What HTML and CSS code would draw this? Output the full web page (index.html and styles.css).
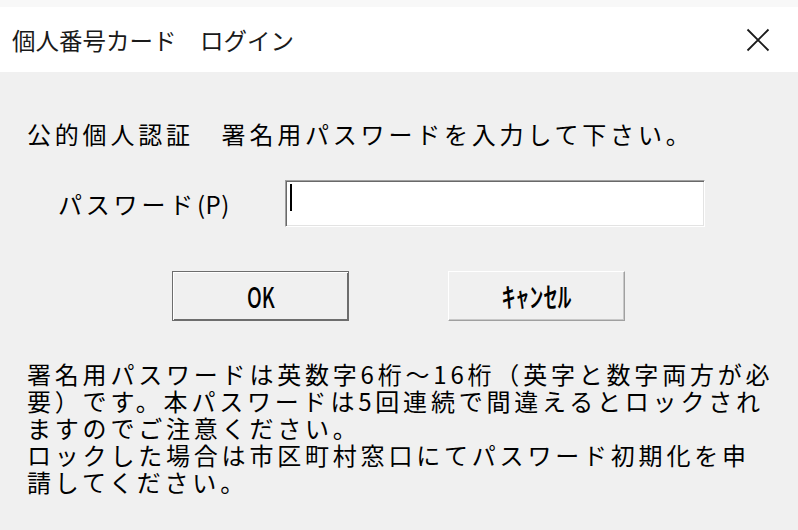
FILE: index.html
```html
<!DOCTYPE html>
<html lang="ja">
<head>
  <meta charset="UTF-8">
  <meta name="viewport" content="width=device-width, initial-scale=1.0">
  <title>個人番号カード ログイン</title>
  <link rel="stylesheet" href="styles.css">
</head>
<body>

  <div class="top-strip"></div>

  <div class="titlebar">
    <span class="title">個人番号カード　ログイン</span>
    <span class="close-btn">
      <svg width="24" height="24" viewBox="0 0 24 24">
        <path d="M1.5 1.5 L22.5 22.5 M22.5 1.5 L1.5 22.5" stroke="#1a1a1a" stroke-width="1.8" fill="none"/>
      </svg>
    </span>
  </div>

  <div class="dialog">
    <p class="lead">公的個人認証　署名用パスワードを入力して下さい。</p>

    <div class="field-row">
      <label class="field-label" for="pin">パスワード<span class="accel">(P)</span></label>
      <div class="text-box" id="pin"><span class="caret"></span></div>
    </div>

    <div class="buttons">
      <button type="button" class="btn btn-default"><span class="btn-text ok">OK</span></button>
      <button type="button" class="btn"><span class="btn-text">ｷｬﾝｾﾙ</span></button>
    </div>

    <div class="note">
      <div class="note-line">署名用パスワードは英数字6桁～16桁（英字と数字両方が必</div>
      <div class="note-line">要）です。本パスワードは5回連続で間違えるとロックされ</div>
      <div class="note-line">ますのでご注意ください。</div>
      <div class="note-line">ロックした場合は市区町村窓口にてパスワード初期化を申</div>
      <div class="note-line">請してください。</div>
    </div>
  </div>

</body>
</html>
```

FILE: styles.css
```css
body {
  margin: 0;
  background-color: #f0f0f0;
  font-family: "Noto Sans CJK JP", "Noto Sans", sans-serif;
  color: #000;
  width: 798px;
  height: 530px;
  overflow: hidden;
}

.top-strip {
  height: 7px;
  background-color: #f8f8f8;
}

.titlebar {
  height: 65px;
  background-color: #fff;
  display: flex;
  align-items: center;
  justify-content: space-between;
  padding: 0 28px 0 12px;
}

.title {
  font-size: 23.5px;
  color: #1a1a1a;
}

.close-btn {
  display: flex;
  width: 24px;
  height: 24px;
}

.dialog {
  padding-left: 27px;
}

.lead {
  margin: 48px 0 0;
  font-size: 24px;
  line-height: 28px;
  letter-spacing: 3.8px;
}

.field-row {
  display: flex;
  align-items: center;
  margin-top: 32px;
}

.field-label {
  width: 227px;
  margin-left: 31px;
  font-size: 24px;
  letter-spacing: 3.8px;
}

.accel {
  letter-spacing: 0.5px;
}

.text-box {
  width: 420px;
  height: 47px;
  box-sizing: border-box;
  background-color: #fff;
  border-top: 1px solid #a0a0a0;
  border-left: 1px solid #a0a0a0;
  border-bottom: 1px solid #fff;
  border-right: 1px solid #fff;
  box-shadow: inset 1px 1px #696969, inset -1px -1px #e3e3e3;
  padding: 3px 0 0 4px;
}

.caret {
  display: block;
  width: 2px;
  height: 27px;
  background-color: #000;
}

.buttons {
  display: flex;
  gap: 99px;
  margin-top: 44px;
  padding-left: 145px;
}

.btn {
  width: 177px;
  height: 50px;
  box-sizing: border-box;
  background-color: #f0f0f0;
  border-top: 1px solid #fff;
  border-left: 1px solid #fff;
  border-right: 1px solid #a0a0a0;
  border-bottom: 1px solid #a0a0a0;
  box-shadow: inset -1px -1px #c8c8c8;
  padding: 0;
  font-family: "Noto Sans CJK JP", sans-serif;
  font-size: 28px;
  font-weight: 500;
  color: #000;
  display: flex;
  align-items: center;
  justify-content: center;
}

.btn-default {
  border: 1px solid #6d6d6d;
  box-shadow: inset 1px 1px #fff, inset -1px -1px #6d6d6d;
}

.btn-text {
  display: inline-block;
  line-height: 1;
}

.btn-text.ok {
  transform: scaleX(0.7);
}

.note {
  margin-top: 39px;
  font-size: 24px;
  letter-spacing: 3.8px;
}

.note-line {
  height: 27px;
  line-height: 27px;
}
```
